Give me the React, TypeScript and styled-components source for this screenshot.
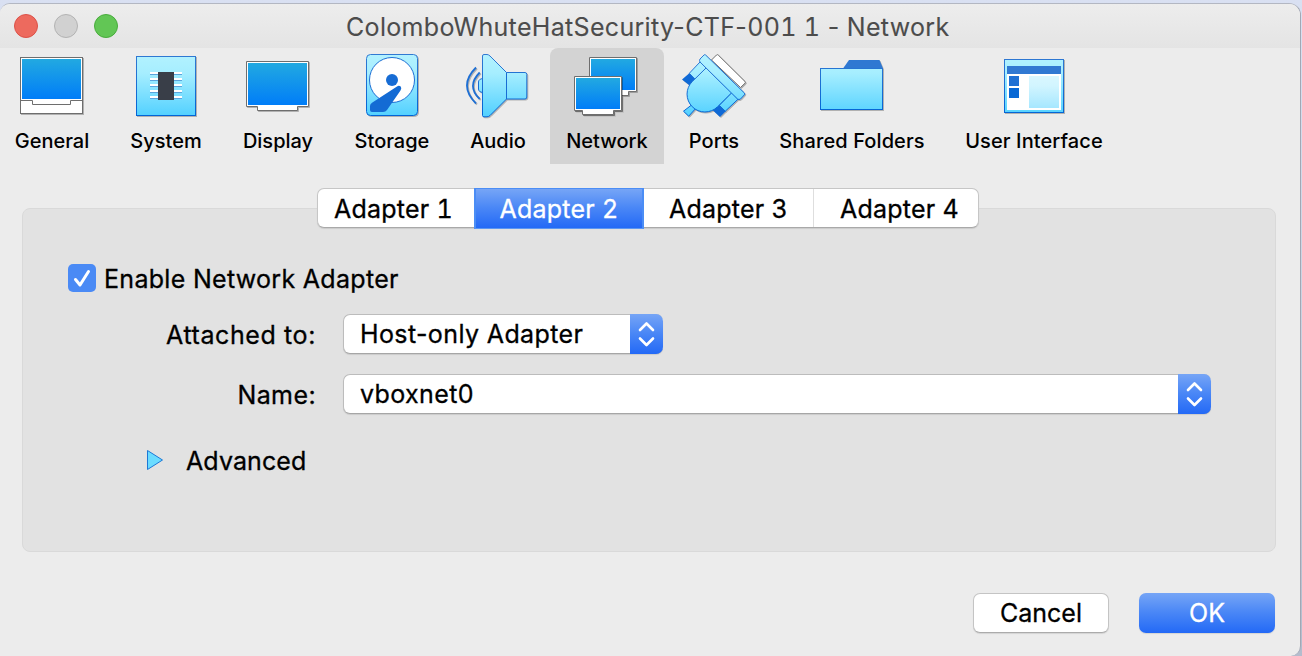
import React from "react";
import styled, { createGlobalStyle, css } from "styled-components";

const GlobalStyle = createGlobalStyle`
  *, *::before, *::after { box-sizing: border-box; }
  body { margin: 0; overflow: hidden; }
  button { font: inherit; color: inherit; border: 0; padding: 0; background: none; }
`;

const blueFill = css`
  background: linear-gradient(#76a5f6 0%, #4a87f6 48%, #2369f6 100%);
`;

const Desktop = styled.div`
  width: 1302px;
  height: 656px;
  padding: 3px 1px 0 0;
  background: linear-gradient(#d9e0f2, #c3cbd9 70%, #b4bccd);
  font-family: Inter, "Liberation Sans", sans-serif;
  font-size: 25px;
  color: #000;
  -webkit-text-stroke: 0.3px currentColor;
`;

const Window = styled.div`
  display: flex;
  flex-direction: column;
  height: 653px;
  border-top: 1px solid #b3b7c2;
  border-right: 1px solid #a2a8b4;
  border-radius: 10px 12px 10px 0;
  background: #ececec;
  overflow: hidden;
`;

const TitleBar = styled.header`
  display: flex;
  align-items: center;
  height: 44px;
  padding-left: 14px;
  background: linear-gradient(#ededed, #e4e4e4);
`;

const Lights = styled.div`
  display: flex;
  gap: 16px;
`;

const Light = styled.span<{ $fill: string; $edge: string }>`
  width: 24px;
  height: 24px;
  border-radius: 50%;
  border: 1px solid ${(p) => p.$edge};
  background: ${(p) => p.$fill};
`;

const Text = styled.span<{ $track?: number }>`
  letter-spacing: ${(p) => p.$track ?? 0}px;
  white-space: nowrap;
`;

const Digits = styled.span`
  font-variant-numeric: tabular-nums;
`;

const Title = styled(Text)`
  margin-left: 228px;
  padding-top: 2px;
  color: #4c4c4c;
  -webkit-text-stroke-width: 0.1px;
`;

const Toolbar = styled.nav`
  display: grid;
  grid-template-columns: 104px 124px 100px 128px 84px 134px 80px 196px 168px;
  justify-items: center;
  height: 116px;
`;

const Tool = styled.button<{ $active?: boolean }>`
  display: flex;
  flex-direction: column;
  align-items: center;
  width: ${(p) => (p.$active ? "114px" : "auto")};
  padding-top: 6px;
  border-radius: 8px 8px 0 0;
  background: ${(p) => (p.$active ? "#d3d3d3" : "transparent")};
  font-size: 20px;
  font-weight: 500;
  line-height: 24px;
  -webkit-text-stroke-width: 0;
`;

const IconArt = styled.svg`
  display: block;
  width: 64px;
  height: 64px;
  margin-bottom: 11px;
  overflow: visible;
  filter: drop-shadow(1px 1px 0 rgba(0, 0, 0, 0.25));
`;

const Content = styled.main`
  padding: 24px 25px 0 22px;
`;

const Tabs = styled.div`
  position: relative;
  display: flex;
  width: 662px;
  height: 40px;
  margin: 0 0 -20px 295px;
  border: 1px solid #c6c6c6;
  border-bottom-color: #a9a9a9;
  border-radius: 7px;
  background: #fff;
  box-shadow: 0 1px 1px rgba(0, 0, 0, 0.1);
`;

const Tab = styled.button<{ $width: number; $active?: boolean; $divided?: boolean }>`
  width: ${(p) => p.$width}px;
  flex: none;
  line-height: 40px;
  border-right: ${(p) => (p.$divided ? "1px solid #dedede" : "0")};

  &:first-child { padding-right: 5px; }
  &:last-child { padding-left: 7px; }

  ${(p) =>
    p.$active &&
    css`
      height: 41px;
      margin: -1px 0;
      color: #fff;
      ${blueFill}
      border: solid #4b8df5;
      border-width: 1px 2px;
      border-bottom-color: #5b96f2;
    `}
`;

const Panel = styled.section`
  width: 1254px;
  height: 344px;
  padding: 55px 0 0 45px;
  border: 1px solid #d9d9d9;
  border-radius: 8px;
  background: #e2e2e2;
`;

const CheckRow = styled.label`
  display: flex;
  align-items: center;
  gap: 8px;
  height: 28px;
`;

const CheckLabel = styled(Text)`
  padding-top: 2px;
`;

const CheckBox = styled.span`
  display: flex;
  width: 28px;
  height: 28px;
  border-radius: 5px;
  background: #4a8af5;
`;

const Field = styled.div<{ $top: number }>`
  display: grid;
  grid-template-columns: 248px auto;
  column-gap: 27px;
  align-items: center;
  height: 40px;
  margin-top: ${(p) => p.$top}px;
`;

const FieldLabel = styled(Text)`
  justify-self: end;
  padding-top: 2px;
`;

const Select = styled.div<{ $width: number }>`
  display: flex;
  align-items: center;
  justify-content: space-between;
  width: ${(p) => p.$width}px;
  height: 40px;
  padding-left: 16px;
  border: 1px solid #bcbcbc;
  border-right: 0;
  border-bottom-color: #a6a6a6;
  border-radius: 7px;
  background: #fff;
  box-shadow: 0 1px 1px rgba(0, 0, 0, 0.1);
`;

const Stepper = styled.span`
  width: 33px;
  height: 40px;
  margin: -1px 0;
  border-radius: 0 7px 7px 0;
  ${blueFill}
`;

const Disclosure = styled.div`
  display: flex;
  align-items: center;
  gap: 22px;
  margin: 32px 0 0 78px;
  height: 30px;
`;

const Footer = styled.footer`
  display: flex;
  justify-content: flex-end;
  gap: 30px;
  margin-top: 41px;
`;

const PushButton = styled.button<{ $primary?: boolean }>`
  width: 136px;
  height: 40px;
  line-height: 38px;
  border-radius: 7px;
  background: #fff;
  border: 1px solid #c4c4c4;
  border-bottom-color: #ababab;
  box-shadow: 0 1px 1px rgba(0, 0, 0, 0.1);
  ${(p) =>
    p.$primary &&
    css`
      border: 0;
      line-height: 40px;
      color: #fff;
      ${blueFill}
    `}
`;

const EDGE = "url(#edge)";
const SKY = "url(#sky)";
const SCREEN = "url(#screen)";

const GradientDefs = styled.svg`
  position: absolute;
  width: 0;
  height: 0;
`;

const Gradients = () => (
  <GradientDefs>
    <defs>
      <linearGradient id="sky" gradientUnits="userSpaceOnUse" x1="0" y1="0" x2="0" y2="64">
        <stop offset="0" stopColor="#b3f2ff" />
        <stop offset="0.3" stopColor="#a6eeff" />
        <stop offset="1" stopColor="#4ecfff" />
      </linearGradient>
      <linearGradient id="edge" gradientUnits="userSpaceOnUse" x1="0" y1="0" x2="0" y2="64">
        <stop offset="0" stopColor="#3179d2" />
        <stop offset="1" stopColor="#0064d6" />
      </linearGradient>
      <linearGradient id="screen" x1="0" y1="0" x2="0" y2="1">
        <stop offset="0" stopColor="#22a9e1" />
        <stop offset="1" stopColor="#007df8" />
      </linearGradient>
      <linearGradient id="pane" x1="0" y1="0" x2="0" y2="1">
        <stop offset="0" stopColor="#d9f7ff" />
        <stop offset="0.3" stopColor="#d2f5ff" />
        <stop offset="1" stopColor="#a6e7ff" />
      </linearGradient>
    </defs>
  </GradientDefs>
);

const GeneralIcon = () => (
  <IconArt viewBox="0 0 64 64">
    <rect x="0.5" y="3.5" width="62" height="56" fill="#fff" stroke="#6e6e6e" />
    <rect x="2" y="5" width="59" height="40" fill={SCREEN} />
    <path d="M0.5 46.5H12.5V50.5H50.5V46.5H62.5" fill="none" stroke="#6e6e6e" />
  </IconArt>
);

const SystemIcon = () => (
  <IconArt viewBox="0 0 64 64">
    <rect x="2.5" y="2.5" width="59" height="59" fill={SKY} stroke={EDGE} />
    {[18, 24, 30, 36, 42].map((y) => (
      <React.Fragment key={y}>
        <rect x="16" y={y} width="32" height="2" fill="#fff" />
        <rect x="16" y={y + 2} width="32" height="1" fill="#5ba4dc" />
      </React.Fragment>
    ))}
    <rect x="24" y="18" width="16" height="28" fill="#393e48" />
  </IconArt>
);

const DisplayIcon = () => (
  <IconArt viewBox="0 0 64 64">
    <path d="M0.5 7.5H62.5V52.5H51.5V56.5H11.5V52.5H0.5Z" fill="#fff" stroke="#6e6e6e" />
    <rect x="2" y="9" width="59" height="42" fill={SCREEN} />
  </IconArt>
);

const StorageIcon = () => (
  <IconArt viewBox="0 0 64 64">
    <rect x="6.5" y="0.5" width="51" height="61" rx="4" fill={SKY} stroke={EDGE} />
    <circle cx="32" cy="26" r="22.5" fill="#fff" stroke="#1f70d4" />
    <circle cx="32" cy="26" r="6" fill="#176cd4" />
    <path
      d="M37 32.4Q39 31.2 40.7 32.5Q42 34 40.5 36.5L27 56Q25.5 58 23 58H12Q10 58 10 56V52Q10 50 12 48.7Z"
      fill="#146bd4"
    />
  </IconArt>
);

const AudioIcon = () => (
  <IconArt viewBox="0 0 64 64">
    <path d="M10 13.5Q-8 31.5 10 49.5M13.7 18.5Q0.2 32 13.7 45" fill="none" stroke="#1d6fd4" strokeWidth="1.8" />
    <path d="M17 24.5Q12.5 25 12.5 28V35Q12.5 38 17 38.5" fill={SKY} stroke={EDGE} />
    <path
      d="M16.5 2Q16.5 0.5 18 0.5H21Q22.5 0.5 24 2L40.5 18.5H59Q60.8 18.5 60.8 20.5V43Q60.8 45 59 45H40.5L24 61.5Q22.5 62.8 21 62.8H18Q16.5 62.8 16.5 61.5Z"
      fill={SKY}
      stroke={EDGE}
    />
    <path d="M40.5 18.5V45" stroke="#176cd4" />
  </IconArt>
);

const NetworkIcon = () => (
  <IconArt viewBox="0 0 64 64">
    <path d="M14.5 3.5H61.5V37.5H53.5V41.5H30V37.5H14.5Z" fill="#fff" stroke="#6e6e6e" />
    <rect x="16" y="5" width="44" height="31" fill={SCREEN} />
    <g filter="drop-shadow(1px 1px 0 rgba(0,0,0,.3))">
      <path d="M-0.5 22.5H46.5V56.5H38.5V60.5H7.5V56.5H-0.5Z" fill="#fff" stroke="#6e6e6e" />
    </g>
    <rect x="1" y="24" width="44" height="31" fill={SCREEN} />
  </IconArt>
);

const PortsIcon = () => (
  <IconArt viewBox="0 0 64 64">
    <path d="M29.5 6L34.5 1Q35.3 0.2 36.2 1L63 27.5Q63.8 28.3 63 29.2L58.5 33.5Z" fill="#fff" stroke="#6e6e6e" />
    <path d="M9.5 51L13.5 54.7L6.7 62.2L1.5 57.2Z" fill={SKY} stroke={EDGE} />
    <path d="M18 8L24 14L13 25.3L7.3 19.3ZM49.7 38.7L56 45.2L43.2 57.3L37.3 51.3Z" fill={SKY} stroke={EDGE} />
    <path d="M7.3 19.3L14 26L8 31.7L0 25.5ZM37.3 51.3L43.7 57.3L38 63L30.5 56Z" fill="#0f69d6" />
    <path d="M24 14L10.3 27.5A17.6 17.6 0 0 0 35.5 52.8L49.7 38.7Z" fill={SKY} stroke={EDGE} />
    <path
      d="M22 1Q22.8 0.2 23.6 1L62.4 39Q63.2 40 62.4 40.8L58.5 45Q57 46 55.5 45L18 8Q17 6.5 18 5Z"
      fill={SKY}
      stroke={EDGE}
    />
  </IconArt>
);

const FolderIcon = () => (
  <IconArt viewBox="0 0 64 64">
    <path d="M23 14.5L29 6H59.5L63 14.5Z" fill="#2f78d2" />
    <rect x="0.5" y="14.5" width="62" height="41" fill={SKY} stroke={EDGE} />
  </IconArt>
);

const InterfaceIcon = () => (
  <IconArt viewBox="0 0 64 64">
    <rect x="2.5" y="5.5" width="59" height="53" fill={SKY} stroke={EDGE} />
    <rect x="5" y="12" width="54" height="44" fill="#fff" />
    <rect x="5" y="12" width="54" height="8" fill="#3078d2" />
    <rect x="7" y="22" width="10" height="10" fill="#1f70d4" />
    <rect x="7" y="34" width="10" height="10" fill="#0868d5" />
    <rect x="27" y="22" width="30" height="32" fill="url(#pane)" />
  </IconArt>
);

const Arrows = () => (
  <Stepper>
    <svg width="33" height="40" fill="none" stroke="#fff" strokeWidth="2.6" strokeLinecap="round" strokeLinejoin="round">
      <path d="M10 16L16.5 9.5L23 16M10 24.5L16.5 31L23 24.5" />
    </svg>
  </Stepper>
);

const tools = [
  { label: "General", Icon: GeneralIcon },
  { label: "System", Icon: SystemIcon },
  { label: "Display", Icon: DisplayIcon },
  { label: "Storage", Icon: StorageIcon },
  { label: "Audio", Icon: AudioIcon },
  { label: "Network", Icon: NetworkIcon, active: true },
  { label: "Ports", Icon: PortsIcon },
  { label: "Shared Folders", Icon: FolderIcon, track: 0.1 },
  { label: "User Interface", Icon: InterfaceIcon, track: 0.1 },
];

const tabs = [
  { number: 1, width: 156 },
  { number: 2, width: 170, active: true },
  { number: 3, width: 170, divided: true },
  { number: 4, width: 164 },
];

export default function App() {
  return (
    <Desktop>
      <GlobalStyle />
      <Gradients />
      <Window>
        <TitleBar>
          <Lights>
            <Light $fill="#ed6a5e" $edge="#dc5148" />
            <Light $fill="#d1d1d1" $edge="#b3b3b3" />
            <Light $fill="#62c655" $edge="#48ac3c" />
          </Lights>
          <Title $track={0.32}>
            ColomboWhuteHatSecurity-CTF-<Digits>001 1</Digits> - Network
          </Title>
        </TitleBar>
        <Toolbar>
          {tools.map(({ label, Icon, track, active }) => (
            <Tool key={label} $active={active}>
              <Icon />
              <Text $track={track}>{label}</Text>
            </Tool>
          ))}
        </Toolbar>
        <Content>
          <Tabs>
            {tabs.map(({ number, width, active, divided }) => (
              <Tab key={number} $width={width} $active={active} $divided={divided}>
                <Text $track={0.22}>
                  Adapter <Digits>{number}</Digits>
                </Text>
              </Tab>
            ))}
          </Tabs>
          <Panel>
            <CheckRow>
              <CheckBox>
                <svg width="28" height="28" fill="none" stroke="#fff" strokeWidth="3" strokeLinecap="round" strokeLinejoin="round">
                  <path d="M7.5 15.5L12 21L20.5 7.5" />
                </svg>
              </CheckBox>
              <CheckLabel $track={0.3}>Enable Network Adapter</CheckLabel>
            </CheckRow>
            <Field $top={22}>
              <FieldLabel $track={0.6}>Attached to:</FieldLabel>
              <Select $width={320}>
                <Text $track={0.38}>Host-only Adapter</Text>
                <Arrows />
              </Select>
            </Field>
            <Field $top={20}>
              <FieldLabel $track={0.4}>Name:</FieldLabel>
              <Select $width={868}>
                <Text $track={0.38}>vboxnet0</Text>
                <Arrows />
              </Select>
            </Field>
            <Disclosure>
              <svg width="18" height="24">
                <path d="M1.5 1.5L16.5 11L1.5 20.5Z" fill="#6bdcff" stroke="#1d78d6" strokeLinejoin="round" />
              </svg>
              <Text $track={0.1}>Advanced</Text>
            </Disclosure>
          </Panel>
          <Footer>
            <PushButton><Text>Cancel</Text></PushButton>
            <PushButton $primary><Text>OK</Text></PushButton>
          </Footer>
        </Content>
      </Window>
    </Desktop>
  );
}
